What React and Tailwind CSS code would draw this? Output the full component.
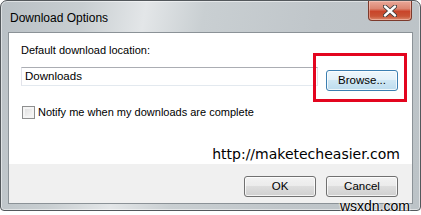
const ui = { fontFamily: '"Liberation Sans", Arial, sans-serif' };

function CloseGlyph() {
  return (
    <svg width="14" height="12" viewBox="0 0 14 12">
      <path
        d="M2 1.5 L12 10.5 M12 1.5 L2 10.5"
        stroke="#3a3a3a"
        strokeWidth="4.2"
        strokeLinecap="round"
      />
      <path
        d="M2 1.5 L12 10.5 M12 1.5 L2 10.5"
        stroke="#ffffff"
        strokeWidth="2.4"
        strokeLinecap="round"
      />
    </svg>
  );
}

function WinButton({ children, focus }) {
  return (
    <button
      className={[
        "h-[21px] w-[72px] rounded-[3px] border text-[11.5px] leading-none text-black",
        "shadow-[inset_0_0_0_1px_rgba(255,255,255,0.75)]",
        focus
          ? "border-[#3c7fb1] bg-[linear-gradient(#eef7fc_0%,#e3f1f9_48%,#cfe7f4_50%,#bcdcee_100%)]"
          : "border-[#707070] bg-[linear-gradient(#f2f2f2_0%,#ebebeb_48%,#dddddd_50%,#cfcfcf_100%)]",
      ].join(" ")}
      style={ui}
    >
      {children}
    </button>
  );
}

export default function App() {
  return (
    <div className="relative h-[215px] w-[421px] bg-white" style={ui}>
      {/* window frame */}
      <div className="flex h-[211px] flex-col rounded-t-[7px] rounded-b-[4px] border border-[#53585c] bg-[linear-gradient(100deg,#b9c0c5_0%,#c8ced1_18%,#e3e6e8_32%,#c9cfd2_45%,#c0c6ca_70%,#bcc3c7_100%)] px-[7px] pb-[6px] shadow-[inset_0_0_0_1px_rgba(255,255,255,0.5)]">
        {/* title bar */}
        <div className="flex h-[31px] items-start justify-between">
          <span className="mt-[9px] pl-[2px] text-[12px] leading-[16px] text-black">Download Options</span>
          <div className="mr-[1px] flex h-[20px] w-[44px] items-center justify-center rounded-b-[4px] border border-t-0 border-[#7c3a2c] bg-[linear-gradient(#e9a899_0%,#dc8672_40%,#c9452a_55%,#c95436_80%,#dc8a6d_100%)] shadow-[inset_0_0_0_1px_rgba(255,220,210,0.45)]">
            <CloseGlyph />
          </div>
        </div>

        {/* client area */}
        <div className="flex flex-1 flex-col border border-[#8b9297] bg-white">
          <div className="flex flex-1 flex-col px-[12px] pt-[10px]">
            <div className="text-[11px] leading-[15px] text-black">Default download location:</div>
            <div className="mt-[9px] flex items-start">
              <div className="flex h-[19px] w-[297px] items-center border border-[#abadb3] border-x-[#e2e3ea] border-b-[#e3e9ef] pl-[3px] text-[11.5px] text-black">
                Downloads
              </div>
              <div className="ml-[8px]">
                <WinButton focus>Browse...</WinButton>
              </div>
            </div>
            <label className="mt-[14px] flex items-center gap-[3px] text-[11px] leading-[15px] text-black">
              <span className="ml-[1px] h-[13px] w-[13px] border border-[#8e8f8f] bg-[linear-gradient(135deg,#dcdcdc,#fbfbfb)] shadow-[inset_0_0_0_2px_#f4f4f4]" />
              Notify me when my downloads are complete
            </label>
            <div
              className="mt-auto mb-[1px] self-end text-[14px] leading-[18px] text-black"
              style={{ fontFamily: '"DejaVu Sans", sans-serif' }}
            >
              http://maketecheasier.com
            </div>
          </div>
          <div className="flex h-[39px] items-start justify-end gap-[10px] bg-[#f0f0f0] pr-[14px] pt-[12px]">
            <WinButton>OK</WinButton>
            <WinButton>Cancel</WinButton>
          </div>
        </div>
      </div>

      {/* red highlight annotation */}
      <div className="absolute left-[313px] top-[53px] h-[49px] w-[94px] border-[3px] border-[#e3051f]" />

      {/* watermark */}
      <div
        className="absolute right-[11px] bottom-[1px] text-[14px] leading-[16px] text-black [text-shadow:0_0_2px_#fff,0_0_2px_#fff,0_0_2px_#fff]"
        style={ui}
      >
        wsxdn.com
      </div>
    </div>
  );
}
